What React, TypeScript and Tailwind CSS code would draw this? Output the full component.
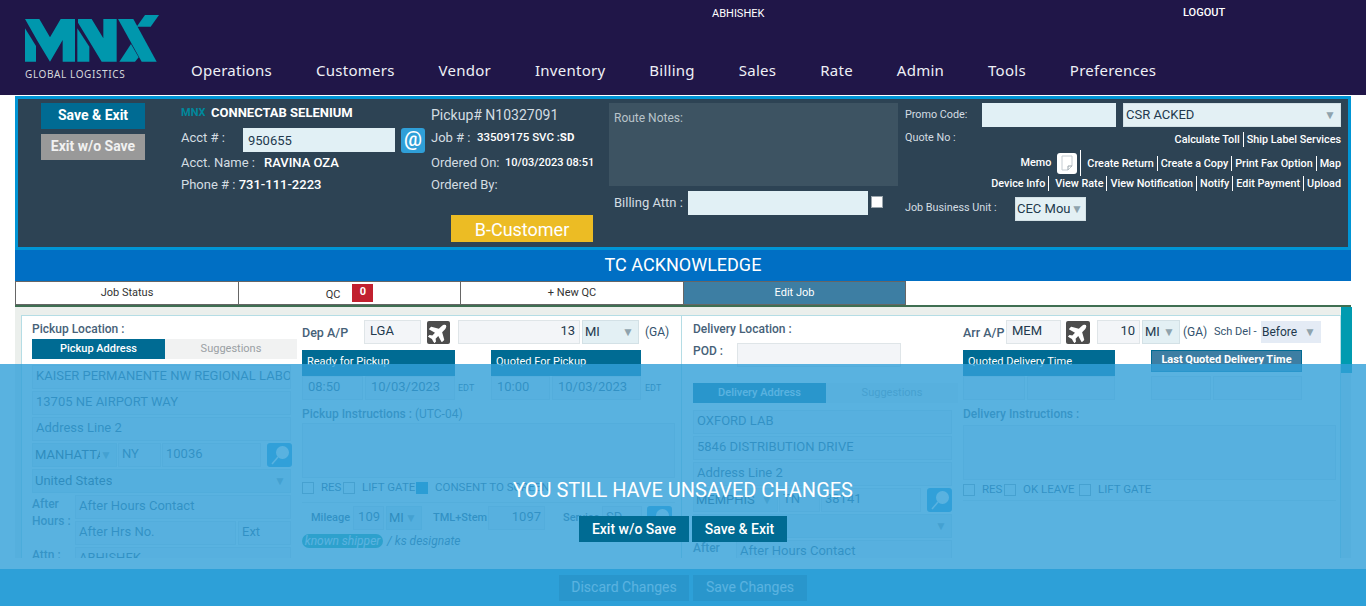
import React from 'react';
import { FaPlane } from 'react-icons/fa';

const Logo = () => (
  <svg width="145" height="54" viewBox="15 15 435 162" className="block">
    <g fill="#0097ad">
      <polygon points="15,27 58,27 90,82 122,27 165,27 165,155 128,155 128,90 90,155 52,92 15,27" />
      <polygon points="15,55 48,108 48,155 15,155" />
      <polygon points="174,27 215,27 250,85 250,27 290,27 290,155 245,155 207,92 174,38" />
      <polygon points="172,55 208,110 208,155 172,155" />
      <polygon points="294,27 340,27 410,155 365,155" />
      <polygon points="298,155 333,102 356,142 345,155" />
      <polygon points="375,15 417,15 392,50 350,50" />
    </g>
  </svg>
);

const PlaneBtn = ({ className = '' }: { className?: string }) => (
  <div className={`h-[23px] bg-[#4d4d4d] rounded-[2px] flex items-center justify-center shrink-0 ${className}`}>
    <FaPlane className="text-white text-[21px] -rotate-45" />
  </div>
);

const SearchBtn = ({ className = '' }: { className?: string }) => (
  <div className={`h-[24px] w-[25px] bg-[#2f9fd8] rounded-[3px] flex items-center justify-center shrink-0 ${className}`}>
    <svg width="20" height="20" viewBox="0 0 20 20">
      <circle cx="12.5" cy="7.5" r="6.5" fill="#ffffff" />
      <line x1="8" y1="12" x2="2" y2="19" stroke="#ffffff" strokeWidth="1.5" />
    </svg>
  </div>
);

// plain form box, text stays real text
const Box = ({ children, className = '' }: { children?: React.ReactNode; className?: string }) => (
  <div className={`h-[24px] border border-[#dfe5e8] bg-[#f3f5f8] text-[13px] leading-[20px] px-[3px] text-[#33536e] whitespace-nowrap overflow-hidden shrink-0 ${className}`}>
    {children}
  </div>
);

const Arrow = () => <span className="ml-auto shrink-0 text-[12px] text-[#8fa3ad]">▼</span>;

const Select = ({ children, className = '' }: { children?: React.ReactNode; className?: string }) => (
  <div className={`h-[24px] border border-[#d3e1e6] bg-[#e3f0f4] text-[13px] leading-[20px] pl-[2px] pr-[4px] text-[#22394d] flex items-center whitespace-nowrap overflow-hidden shrink-0 ${className}`}>
    <span className="overflow-hidden">{children}</span>
    <Arrow />
  </div>
);

const Check = ({ on = false }: { on?: boolean }) => (
  <span className={`inline-block w-[12px] h-[12px] border shrink-0 ${on ? 'bg-[#0c8fc4] border-[#0c8fc4]' : 'bg-white border-[#9aa5ac]'}`} />
);

const BlueHead = ({ children, className = '' }: { children: React.ReactNode; className?: string }) => (
  <div className={`h-[26px] bg-[#006b93] text-white text-[11px] leading-[24px] pl-[5px] shrink-0 whitespace-nowrap ${className}`}>{children}</div>
);

const AddrTabs = ({ first }: { first: string }) => (
  <div className="flex w-[265px] h-[20px] text-[11px] leading-[19px] text-center">
    <div className="w-[133px] bg-[#006b93] text-white font-medium">{first}</div>
    <div className="w-[132px] bg-[#f1f2f2] text-[#9aa0a4]">Suggestions</div>
  </div>
);

const Sep = ({ children, last = false, className = '' }: { children: React.ReactNode; last?: boolean; className?: string }) => (
  <span className={`${last ? 'pl-[3px]' : 'px-[3px] border-r border-white'} leading-[15px] ${className}`}>{children}</span>
);

const navItems = ['Operations', 'Customers', 'Vendor', 'Inventory', 'Billing', 'Sales', 'Rate', 'Admin', 'Tools', 'Preferences'];

export default function App() {
  return (
    <div className="relative h-[606px] overflow-hidden bg-white font-[Roboto,sans-serif] text-[13px]">
      {/* header */}
      <header className="h-[95px] bg-[#201648] flex">
        <div className="w-[191px] pl-[25px] pt-[15px] shrink-0">
          <Logo />
          <div className="text-[10px] leading-[12px] mt-[-1px] text-[#d5d8dc] tracking-[0.6px] font-[Noto_Sans,sans-serif] whitespace-nowrap">GLOBAL LOGISTICS</div>
        </div>
        <div className="flex-1 flex flex-col">
          <div className="h-[27px] relative text-white text-[11px]">
            <span className="absolute left-[521px] top-[6px]">ABHISHEK</span>
            <span className="absolute left-[992px] top-[5px] font-medium">LOGOUT</span>
          </div>
          <nav className="mt-[32px] flex gap-[44px] text-[15px] leading-[22px] text-[#eef0f6] tracking-[0.25px] font-[Noto_Sans,sans-serif]">
            {navItems.map((n) => (
              <span key={n}>{n}</span>
            ))}
          </nav>
        </div>
      </header>

      <main className="pl-[15px] pr-[15px] pt-px">
        {/* job summary panel */}
        <section className="h-[154px] border-[3px] border-[#0095d5] bg-[#2d4354] flex text-[#d4dde2]">
          <div className="ml-[23px] w-[104px] pt-[4px] shrink-0 text-center text-[14px] font-bold">
            <div className="h-[26px] bg-[#006b93] text-white leading-[24px]">Save &amp; Exit</div>
            <div className="h-[26px] mt-[5px] bg-[#999999] text-[#f1f1f1] leading-[24px]">Exit w/o Save</div>
          </div>

          <div className="ml-[36px] w-[250px] pt-[4px] shrink-0">
            <div className="h-[20px] flex items-center">
              <span className="text-[#00889c] text-[11px] font-bold w-[30px]">MNX</span>
              <span className="text-white font-bold text-[13px]">CONNECTAB SELENIUM</span>
            </div>
            <div className="h-[24px] mt-[5px] flex items-center">
              <span className="w-[62px] -mt-[4px]">Acct # :</span>
              <div className="w-[152px] h-[24px] bg-[#e1f0f5] text-[#22394d] pl-[5px] text-[13px] leading-[26px]">950655</div>
              <div className="ml-[6px] w-[24px] h-[25px] rounded-[3px] bg-[#2f9fd8] text-white text-[20px] font-medium leading-[23px] text-center">@</div>
            </div>
            <div className="h-[18px] mt-[2px] flex items-center">
              <span className="w-[83px]">Acct. Name :</span>
              <span className="text-white font-medium">RAVINA OZA</span>
            </div>
            <div className="h-[18px] mt-[4px] flex items-center">
              <span>Phone # :&nbsp;</span>
              <span className="text-white font-medium">731-111-2223</span>
            </div>
          </div>

          <div className="w-[178px] pt-[7px] shrink-0 whitespace-nowrap">
            <div className="h-[18px] text-[14px] leading-[18px]">Pickup# N10327091</div>
            <div className="h-[18px] mt-[5px] flex items-center">
              <span className="w-[46px]">Job # :</span>
              <span className="text-white text-[11.5px] font-medium">33509175 SVC :<span className="font-bold">SD</span></span>
            </div>
            <div className="h-[18px] mt-[7px] flex items-center">
              <span className="w-[74px]">Ordered On:</span>
              <span className="text-white text-[11px] font-medium">10/03/2023 08:51</span>
            </div>
            <div className="h-[18px] mt-[4px] leading-[18px]">Ordered By:</div>
            <div className="ml-[20px] mt-[21px] w-[142px] h-[27px] bg-[#ecbc24] text-white text-[18px] leading-[29px] text-center">B-Customer</div>
          </div>

          <div className="w-[289px] pt-[4px] shrink-0">
            <div className="h-[83px] bg-[#3d5362] text-[12px] text-[#b9c4ca] pl-[5px] pt-[6px]">Route Notes:</div>
            <div className="h-[24px] mt-[5px] flex items-center">
              <span className="ml-[5px] w-[74px]">Billing Attn :</span>
              <div className="w-[180px] h-[24px] bg-[#e1f0f5]" />
              <span className="ml-[3px] -mt-[2px] flex"><Check /></span>
            </div>
          </div>

          <div className="ml-[7px] w-[436px] pt-[4px] shrink-0 text-[10.8px]">
            <div className="h-[24px] flex items-center">
              <span className="w-[77px]">Promo Code:</span>
              <div className="w-[134px] h-[24px] bg-[#e1f0f5]" />
              <Select className="ml-[7px] w-[218px]">CSR ACKED</Select>
            </div>
            <div className="h-[18px] mt-[2px] flex justify-between items-center">
              <span>Quote No :</span>
              <span className="flex items-center text-white font-medium mt-[2px]">
                <Sep>Calculate Toll</Sep>
                <Sep last>Ship Label Services</Sep>
              </span>
            </div>
            <div className="h-[26px] mt-[3px] flex justify-end items-center text-white font-medium">
              <span>Memo</span>
              <div className="ml-[6px] w-[20px] h-[21px] bg-white rounded-[3px] flex items-center justify-center">
                <svg width="12" height="16" viewBox="0 0 12 16">
                  <path d="M1 1 H11 V11 L7 15 H1 Z" fill="#ffffff" stroke="#c4ccd2" />
                  <path d="M7 15 V11 H11" fill="none" stroke="#9aa5ac" />
                </svg>
              </div>
              <span className="ml-[3px] h-[26px] border-r border-white" />
              <span className="w-[3px]" />
              <Sep>Create Return</Sep>
              <Sep>Create a Copy</Sep>
              <Sep>Print Fax Option</Sep>
              <Sep last>Map</Sep>
            </div>
            <div className="h-[16px] mt-[-1px] flex justify-end items-center text-white font-medium">
              <Sep>Device Info</Sep>
              <span className="w-[3px]" />
              <Sep>View Rate</Sep>
              <Sep>View Notification</Sep>
              <Sep>Notify</Sep>
              <Sep>Edit Payment</Sep>
              <Sep last>Upload</Sep>
            </div>
            <div className="h-[24px] mt-[6px] flex items-center">
              <span className="w-[110px] -mt-[2px]">Job Business Unit :</span>
              <Select className="w-[71px] !pl-px !pr-[2px]">CEC Mou</Select>
            </div>
          </div>
        </section>

        <div className="h-[31px] bg-[#006fc4] text-white text-[18px] leading-[29px] text-center">TC ACKNOWLEDGE</div>

        {/* tabs */}
        <div className="h-[26px] flex border-b-2 border-[#3f6f52] text-[11px] text-[#333333] text-center leading-[21px]">
          <div className="w-[224px] border border-[#666666]">Job Status</div>
          <div className="w-[222px] border border-l-0 border-[#666666] flex justify-center items-center gap-[12px]">
            <span className="pt-[2px]">QC</span>
            <span className="w-[21px] h-[18px] bg-[#c1202f] text-white font-bold leading-[16px]">0</span>
          </div>
          <div className="w-[223px] border border-l-0 border-[#666666]">+ New QC</div>
          <div className="w-[222px] border border-l-0 border-[#666666] bg-[#3d7ea3] text-white">Edit Job</div>
        </div>

        {/* job form */}
        <section className="h-[251px] overflow-hidden bg-[#ebefec] pl-[6px] pr-[10px] pt-[8px]">
          <div className="h-[300px] bg-white border border-[#b5dde5] flex text-[#33536e]">
            <div className="w-[660px] border-r border-[#b5dde5] pl-[10px] flex shrink-0">
              <div className="w-[259px] shrink-0">
                <div className="mt-[5px] mb-[2px] h-[16px] text-[12px] font-medium leading-[16px] text-[#466178]">Pickup Location :</div>
                <AddrTabs first="Pickup Address" />
                <div className="mt-[6px] flex flex-col gap-[2px]">
                  <Box>KAISER PERMANENTE NW REGIONAL LABO</Box>
                  <Box>13705 NE AIRPORT WAY</Box>
                  <Box className="text-[#9fb0bd]">Address Line 2</Box>
                  <div className="flex gap-px">
                    <Select className="w-[85px]">MANHATTA</Select>
                    <Box className="w-[43px]">NY</Box>
                    <Box className="w-[99px]">10036</Box>
                    <SearchBtn className="ml-[5px]" />
                  </div>
                  <Select>United States</Select>
                  <div className="flex">
                    <div className="w-[43px] shrink-0 text-[12px] font-medium leading-[17px] pt-[1px] text-[#466178]">After<br />Hours :</div>
                    <div className="flex-1 flex flex-col gap-[2px]">
                      <Box className="text-[#9fb0bd]">After Hours Contact</Box>
                      <div className="flex gap-[2px]">
                        <Box className="w-[161px] text-[#9fb0bd]">After Hrs No.</Box>
                        <Box className="flex-1 shrink text-[#9fb0bd]">Ext</Box>
                      </div>
                    </div>
                  </div>
                  <div className="flex">
                    <div className="w-[43px] shrink-0 text-[12px] font-medium text-[#466178] leading-[16px]">Attn :</div>
                    <Box className="flex-1">ABHISHEK</Box>
                  </div>
                </div>
              </div>

              <div className="ml-[11px] w-[373px] shrink-0 pt-[4px]">
                <div className="flex items-center h-[24px]">
                  <span className="w-[62px] text-[12.5px] font-medium text-[#466178] pt-[2px]">Dep A/P</span>
                  <Box className="w-[57px] !text-[#22394d] pl-[5px]">LGA</Box>
                  <PlaneBtn className="ml-[6px] w-[23px]" />
                  <Box className="ml-[8px] w-[122px] text-right !text-[#22394d] pr-[4px]">13</Box>
                  <Select className="ml-[2px] w-[57px]">MI</Select>
                  <span className="ml-[6px] text-[12px]">(GA)</span>
                </div>
                <div className="flex mt-[6px]">
                  <BlueHead className="w-[153px]">Ready for Pickup</BlueHead>
                  <BlueHead className="ml-[36px] w-[150px]">Quoted For Pickup</BlueHead>
                </div>
                <div className="flex items-center">
                  <Box className="w-[61px] pl-[5px]">08:50</Box>
                  <Box className="ml-[2px] w-[90px] pl-[5px]">10/03/2023</Box>
                  <span className="ml-[3px] w-[33px] text-[9px] pt-[2px]">EDT</span>
                  <Box className="w-[59px] pl-[5px]">10:00</Box>
                  <Box className="ml-[2px] w-[89px] pl-[5px]">10/03/2023</Box>
                  <span className="ml-[4px] text-[9px] pt-[2px]">EDT</span>
                </div>
                <div className="mt-[6px] h-[16px] text-[12px] leading-[16px] text-[#466178]"><b className="font-medium">Pickup Instructions :</b> (UTC-04)</div>
                <Box className="mt-px !h-[55px]" />
                <div className="h-[20px] flex items-center text-[11.5px]">
                  <Check />
                  <span className="ml-[7px] w-[22px]">RES</span>
                  <Check />
                  <span className="ml-[7px] w-[54px]">LIFT GATE</span>
                  <Check on />
                  <span className="ml-[7px]">CONSENT TO SCREEN</span>
                </div>
                <div className="mt-[4px] border-t border-[#e3e7ea] pt-[3px] h-[28px] flex items-center text-[11px]">
                  <span className="ml-[9px] w-[42px] font-medium">Mileage</span>
                  <Box className="w-[31px] text-right">109</Box>
                  <Select className="ml-[2px] w-[36px]">MI</Select>
                  <span className="ml-[11px] w-[55px] font-medium">TML+Stem</span>
                  <Box className="w-[57px] text-right">1097</Box>
                  <span className="ml-[18px] w-[39px] font-medium">Service</span>
                  <Box className="w-[40px]">SD</Box>
                  <SearchBtn className="ml-[5px]" />
                </div>
                <div className="mt-[4px] h-[14px] flex items-center text-[12px] italic">
                  <span className="w-[81px] h-[14px] rounded-full bg-[#1aa39a] text-white text-center leading-[14px]">known shipper</span>
                  <span className="ml-[4px]">/ ks designate</span>
                </div>
              </div>
            </div>

            <div className="flex-1 pl-[11px] flex">
              <div className="w-[265px] shrink-0">
                <div className="mt-[5px] mb-[2px] h-[16px] text-[12px] font-medium leading-[16px] text-[#466178]">Delivery Location :</div>
                <div className="mt-[6px] flex items-start">
                  <span className="w-[44px] text-[12px] font-medium text-[#466178] leading-[16px]">POD :</span>
                  <Box className="w-[164px]" />
                </div>
                <div className="mt-[16px]"><AddrTabs first="Delivery Address" /></div>
                <div className="mt-[7px] w-[259px] flex flex-col gap-[2px]">
                  <Box>OXFORD LAB</Box>
                  <Box>5846 DISTRIBUTION DRIVE</Box>
                  <Box className="text-[#9fb0bd]">Address Line 2</Box>
                  <div className="flex gap-px">
                    <Select className="w-[85px]">MEMPHIS</Select>
                    <Box className="w-[41px]">TN</Box>
                    <Box className="w-[100px]">38141</Box>
                    <SearchBtn className="ml-[5px]" />
                  </div>
                  <Select className="!w-full">United States</Select>
                  <div className="flex">
                    <div className="w-[43px] shrink-0 text-[12px] font-medium -mt-[1px] text-[#466178]">After</div>
                    <Box className="flex-1 text-[#9fb0bd]">After Hours Contact</Box>
                  </div>
                </div>
              </div>

              <div className="ml-[5px] w-[373px] shrink-0 pt-[4px]">
                <div className="flex items-center h-[24px] whitespace-nowrap">
                  <span className="w-[43px] text-[12.5px] font-medium text-[#466178] pt-[2px]">Arr A/P</span>
                  <Box className="w-[55px] !text-[#22394d] pl-[5px]">MEM</Box>
                  <PlaneBtn className="ml-[5px] w-[24px]" />
                  <Box className="ml-[7px] w-[43px] text-right !text-[#22394d] pr-[4px]">10</Box>
                  <Select className="ml-[2px] w-[38px]">MI</Select>
                  <span className="ml-[3px] w-[31px] text-[12px]">(GA)</span>
                  <span className="w-[47px] text-[11px]">Sch Del -</span>
                  <div className="w-[60px] h-[22px] bg-[#e4ebf5] text-[#22394d] text-[12px] leading-[20px] pl-[1px] pr-[5px] flex items-center">Before<Arrow /></div>
                </div>
                <div className="flex mt-[6px] items-start">
                  <BlueHead className="w-[152px]">Quoted Delivery Time</BlueHead>
                  <div className="ml-[36px] w-[151px] h-[22px] bg-[#3d7ea3] border border-[#006b93] text-white text-[11px] font-bold leading-[18px] text-center whitespace-nowrap">Last Quoted Delivery Time</div>
                </div>
                <div className="flex">
                  <Box className="w-[62px]" />
                  <Box className="ml-[2px] w-[88px]" />
                  <Box className="ml-[36px] w-[60px]" />
                  <Box className="ml-[2px] w-[89px]" />
                </div>
                <div className="mt-[6px] h-[16px] text-[12px] font-medium leading-[16px] text-[#466178]">Delivery Instructions :</div>
                <Box className="mt-[3px] !h-[55px]" />
                <div className="h-[20px] flex items-center text-[11.5px]">
                  <Check />
                  <span className="ml-[7px] w-[22px]">RES</span>
                  <Check />
                  <span className="ml-[7px] w-[56px]">OK LEAVE</span>
                  <Check />
                  <span className="ml-[7px]">LIFT GATE</span>
                </div>
                <div className="border-t border-[#e3e7ea]" />
              </div>
            </div>
          </div>
        </section>
      </main>

      {/* footer actions */}
      <footer className="mt-[11px] h-[37px] bg-[#19a0d3] flex justify-center items-center gap-[4px] text-white text-[14px]">
        <div className="w-[130px] h-[26px] bg-[#006b93] text-center leading-[24px]">Discard Changes</div>
        <div className="w-[114px] h-[26px] bg-[#006b93] text-center leading-[24px]">Save Changes</div>
      </footer>

      {/* scroll thumb */}
      <div className="absolute left-[1341px] top-[307px] w-[11px] h-[66px] bg-[#009bb0]" />

      {/* unsaved changes overlay */}
      <div className="absolute left-0 right-0 top-[364px] bottom-0 bg-[rgba(51,160,217,0.81)] flex flex-col items-center pt-[114px]">
        <div className="h-[24px] text-white text-[20px] leading-[24px]">YOU STILL HAVE UNSAVED CHANGES</div>
        <div className="mt-[14px] flex gap-[3px] text-white text-[14px] leading-[26px] text-center font-medium">
          <div className="w-[110px] h-[26px] bg-[#006b93]">Exit w/o Save</div>
          <div className="w-[95px] h-[26px] bg-[#006b93]">Save &amp; Exit</div>
        </div>
      </div>
    </div>
  );
}
